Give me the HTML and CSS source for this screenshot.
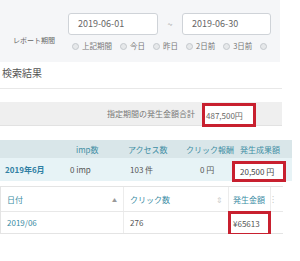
FILE: index.html
```html
<!DOCTYPE html>
<html>
<head lang="ja">
    <meta charset="utf-8">
    <title>レポート</title>
    <link rel="stylesheet" href="styles.css">
</head>
<body>
<div class="period">
    <div class="period-label">レポート期間</div>
    <div class="period-main">
        <div class="dates">
            <div class="date-box">2019-06-01</div>
            <span class="tilde">~</span>
            <div class="date-box">2019-06-30</div>
        </div>
        <div class="radios">
            <span class="radio"><i></i>上記期間</span>
            <span class="radio"><i></i>今日</span>
            <span class="radio"><i></i>昨日</span>
            <span class="radio"><i></i>2日前</span>
            <span class="radio"><i></i>3日前</span>
            <span class="radio"><i></i></span>
        </div>
    </div>
</div>

<div class="section-title">検索結果</div>

<div class="total-bar">
    <span class="total-label">指定期間の発生金額合計</span>
    <span class="total-value mark">487,500円</span>
</div>

<div class="summary">
    <div class="summary-head">
        <span class="c1"></span>
        <span class="c2">imp数</span>
        <span class="c3">アクセス数</span>
        <span class="c4">クリック報酬</span>
        <span class="c5">発生成果額</span>
    </div>
    <div class="summary-row">
        <span class="c1 month">2019年6月</span>
        <span class="c2">0 imp</span>
        <span class="c3">103 件</span>
        <span class="c4">0 円</span>
        <span class="c5"><span class="mark amount">20,500 円</span></span>
    </div>
</div>

<div class="detail">
    <div class="detail-head">
        <div class="cell date">日付<span class="sort">▲</span></div>
        <div class="cell clicks">クリック数<span class="sort both">⇕</span></div>
        <div class="cell money">発生金額</div>
        <div class="cell rest">⁝</div>
    </div>
    <div class="detail-row">
        <div class="cell date link">2019/06</div>
        <div class="cell clicks">276</div>
        <div class="cell money"><span class="mark yen">¥65613</span></div>
        <div class="cell rest"></div>
    </div>
</div>
</body>
</html>
```

FILE: styles.css
```css
body {
    margin: 0;
    width: 300px;
    font-family: "Noto Sans CJK JP", "Noto Sans", sans-serif;
    color: #555;
    background: #fff;
    overflow: hidden;
}

.period {
    width: 280px;
    height: 62px;
    background: #f5f6f8;
    display: flex;
}

.period-label {
    flex: 0 0 68px;
    padding: 34px 0 0 13px;
    box-sizing: border-box;
    font-size: 7px;
    line-height: 12px;
    color: #666;
    white-space: nowrap;
}

.period-main {
    padding-top: 13px;
}

.dates {
    display: flex;
    align-items: center;
}

.date-box {
    width: 90px;
    height: 22px;
    box-sizing: border-box;
    border: 1px solid #cfd3d8;
    border-radius: 3px;
    background: #fff;
    font-size: 9px;
    line-height: 20px;
    padding-left: 9px;
    color: #666;
}

.date-box + .tilde + .date-box {
    width: 89px;
}

.tilde {
    width: 24px;
    text-align: center;
    font-size: 9px;
    color: #999;
}

.radios {
    display: flex;
    margin: 5px 0 0 4px;
    white-space: nowrap;
}

.radio {
    display: flex;
    align-items: center;
    font-size: 7.5px;
    line-height: 12px;
    color: #777;
    margin-right: 8px;
}

.radio i {
    display: inline-block;
    width: 5px;
    height: 5px;
    border-radius: 50%;
    border: 1px solid #c4c8cc;
    background: #e6e8ea;
    margin-right: 3px;
}

.section-title {
    width: 282px;
    height: 27px;
    box-sizing: border-box;
    padding: 3px 0 0 2px;
    border-bottom: 1px solid #e8e8e8;
    font-size: 10px;
    line-height: 16px;
    color: #555;
}

.total-bar {
    width: 282px;
    height: 24px;
    margin-top: 13px;
    background: #efefef;
    border-bottom: 1px solid #e2e2e2;
    display: flex;
    align-items: flex-start;
    justify-content: flex-end;
    box-sizing: border-box;
    padding-right: 26px;
    font-size: 8px;
    color: #777;
}

.total-label {
    line-height: 24px;
}

.mark {
    border: 3px solid #c8202f;
    box-sizing: border-box;
    display: inline-flex;
    align-items: center;
}

.total-value {
    width: 54px;
    height: 24px;
    margin: 1px 0 0 7px;
    padding-left: 1px;
    background: #fff;
    color: #666;
}

.summary {
    margin-top: 14px;
    width: 292px;
    font-size: 8px;
}

.summary-head, .summary-row {
    display: flex;
    align-items: center;
}

.summary-head {
    height: 18px;
    background: #d9e6e9;
    color: #3f8ea4;
}

.summary-row {
    height: 23px;
    background: #e7f3f6;
    color: #555;
}

.summary span {
    box-sizing: border-box;
    white-space: nowrap;
}

.c1 { width: 64px; padding-left: 5px; }
.c2 { width: 60px; }
.c3 { width: 56px; }
.c4 { width: 56px; }
.c5 { width: 56px; }

.summary-head .c2 { padding-left: 12px; }
.summary-head .c3 { padding-left: 4px; }
.summary-head .c4 { padding-left: 6px; }
.summary-head .c5 { padding-left: 4px; }

.summary-row .c2 { padding-left: 6px; }
.summary-row .c3 { padding-left: 6px; }
.summary-row .c4 { padding-left: 20px; }

.month {
    font-weight: bold;
    color: #2f7fa3;
}

.amount {
    width: 54px;
    height: 21px;
    margin: 3px 0 0 -4px;
    padding-left: 5px;
    background: #fff;
    color: #444;
}

.detail {
    margin-top: 5px;
    width: 282px;
    border: 1px solid #e4e4e4;
    border-right: none;
    font-size: 8px;
}

.detail-head, .detail-row {
    display: flex;
}

.detail-head {
    height: 24px;
    border-bottom: 1px solid #e8e8e8;
    color: #3b8ca4;
}

.detail-row {
    height: 21px;
    color: #555;
}

.cell {
    display: flex;
    align-items: center;
    padding-left: 6px;
    box-sizing: border-box;
    border-right: 1px solid #ececec;
}

.date { width: 123px; justify-content: space-between; padding-right: 6px; }
.clicks { width: 105px; justify-content: space-between; padding-right: 5px; }
.money { width: 42px; padding-left: 4px; }
.rest { flex: 1; border-right: none; color: #bbb; padding-left: 1px; }

.detail-row .money {
    align-items: flex-start;
}

.sort {
    color: #999;
    font-size: 5px;
}

.sort.both {
    color: #ccc;
    font-size: 8px;
}

.link {
    color: #3b8ca4;
}

.yen {
    flex: none;
    width: 43px;
    height: 25px;
    margin: -1px 0 0 -5px;
    padding-left: 2px;
    background: #fff;
}
```
